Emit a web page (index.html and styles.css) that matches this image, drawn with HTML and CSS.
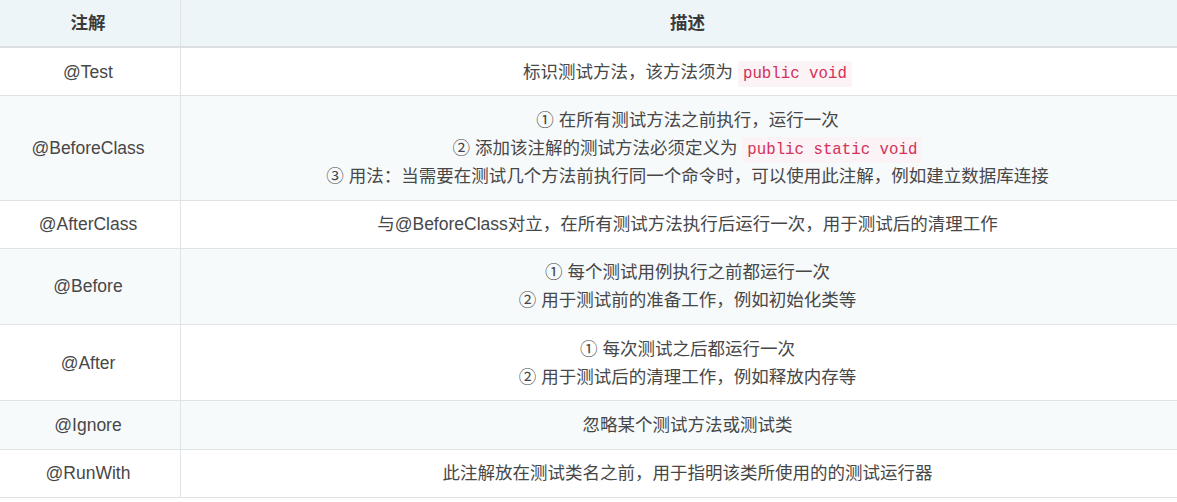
FILE: index.html
```html
<!DOCTYPE html>
<html lang="zh-CN">
<head>
<meta charset="utf-8">
<title>JUnit 注解</title>
<link rel="stylesheet" href="styles.css">
</head>
<body>
<table class="anno-table">
  <thead>
    <tr><th class="col-name">注解</th><th class="col-desc">描述</th></tr>
  </thead>
  <tbody>
    <tr><td>@Test</td><td>标识测试方法，该方法须为 <code>public void</code></td></tr>
    <tr class="alt"><td>@BeforeClass</td><td>① 在所有测试方法之前执行，运行一次<br>② 添加该注解的测试方法必须定义为 <code>public static void</code><br>③ 用法：当需要在测试几个方法前执行同一个命令时，可以使用此注解，例如建立数据库连接</td></tr>
    <tr><td>@AfterClass</td><td>与@BeforeClass对立，在所有测试方法执行后运行一次，用于测试后的清理工作</td></tr>
    <tr class="alt"><td>@Before</td><td>① 每个测试用例执行之前都运行一次<br>② 用于测试前的准备工作，例如初始化类等</td></tr>
    <tr><td>@After</td><td>① 每次测试之后都运行一次<br>② 用于测试后的清理工作，例如释放内存等</td></tr>
    <tr class="alt"><td>@Ignore</td><td>忽略某个测试方法或测试类</td></tr>
    <tr><td>@RunWith</td><td>此注解放在测试类名之前，用于指明该类所使用的的测试运行器</td></tr>
  </tbody>
</table>
</body>
</html>
```
FILE: styles.css
```css
html, body {
  margin: 0;
  padding: 0;
  background: #ffffff;
  overflow: hidden;
}

body {
  font-family: "Liberation Sans", "Noto Sans CJK SC", sans-serif;
  font-size: 17.5px;
  line-height: 28px;
  color: #474747;
}

.anno-table {
  width: 1198px;
  margin-left: -4px;
  border-collapse: collapse;
  table-layout: fixed;
}

.anno-table th,
.anno-table td {
  text-align: center;
  padding: 9.65px 10px;
  border-bottom: 1px solid #dfe3e6;
}

.anno-table th:first-child,
.anno-table td:first-child {
  border-right: 1px solid #dfe3e6;
}

.col-name {
  width: 164px;
}

.anno-table thead th {
  background: #eef5f8;
  font-weight: bold;
  color: #3a3a3a;
  padding: 9px 10px 9px;
  border-bottom: 2px solid #dcdfe2;
}

.anno-table tr.alt td {
  background: #f7fafb;
}

.anno-table code {
  font-family: "Liberation Mono", monospace;
  font-size: 15.75px;
  line-height: 1;
  color: #d3305a;
  background: #fbf3f5;
  padding: 4px 5px;
  border-radius: 3px;
}
```
